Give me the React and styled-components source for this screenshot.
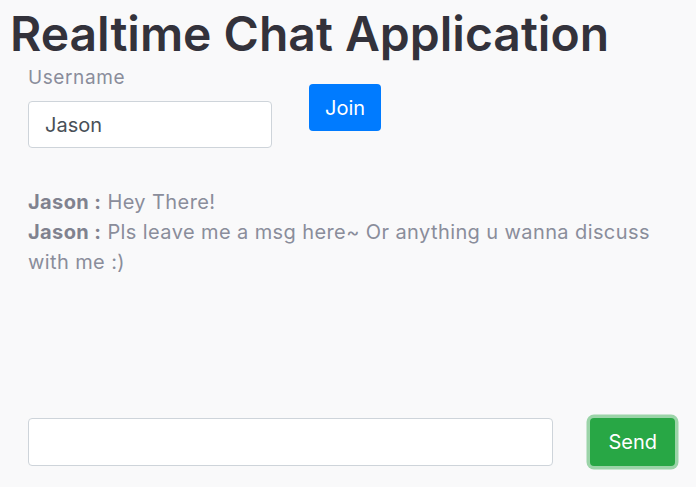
import React from 'react';
import styled, { createGlobalStyle } from 'styled-components';

const GlobalStyle = createGlobalStyle`
  html, body {
    margin: 0;
    padding: 0;
    background: #f9f9fa;
  }
  * {
    box-sizing: border-box;
  }
`;

const messages = [
  { user: 'Jason', text: 'Hey There!' },
  { user: 'Jason', text: 'Pls leave me a msg here~ Or anything u wanna discuss with me :)' },
];

const App = () => {
  return (
    <Page>
      <GlobalStyle />
      <Title>Realtime Chat Application</Title>
      <Body>
        <JoinRow>
          <Field>
            <Label>Username</Label>
            <TextInput defaultValue="Jason" />
          </Field>
          <Button color="blue">Join</Button>
        </JoinRow>
        <MessageList>
          {messages.map((m, i) => (
            <Message key={i}>
              <Author>{m.user} :</Author>
              {m.text}
            </Message>
          ))}
        </MessageList>
        <SendRow>
          <TextInput wide />
          <Button color="green" focused>Send</Button>
        </SendRow>
      </Body>
    </Page>
  );
};

const Page = styled.div`
  height: 487px;
  display: flex;
  flex-direction: column;
  font-family: Inter, "Noto Sans", sans-serif;
  overflow: hidden;
`;

const Title = styled.h1`
  margin: 0;
  padding: 6px 0 0 10px;
  font-size: 48px;
  font-weight: 600;
  line-height: 56px;
  color: #33323b;
`;

const Body = styled.div`
  flex: 1;
  display: flex;
  flex-direction: column;
  padding: 2px 21px 21px 28px;
`;

const JoinRow = styled.div`
  display: flex;
  align-items: flex-start;
  gap: 37px;
`;

const Field = styled.div`
  display: flex;
  flex-direction: column;
  gap: 10px;
`;

const Label = styled.label`
  font-size: 19px;
  line-height: 27px;
  letter-spacing: 0.6px;
  color: #8a8d9b;
`;

const TextInput = styled.input`
  width: ${p => (p.wide ? 'auto' : '244px')};
  flex: ${p => (p.wide ? '1' : 'none')};
  height: ${p => (p.wide ? '48px' : '47px')};
  padding: 0 16px;
  border: 1px solid #ced4da;
  border-radius: 4px;
  background: #fff;
  font-family: inherit;
  font-size: 20px;
  color: #495057;
  outline: none;
`;

const Button = styled.button`
  margin-top: ${p => (p.color === 'blue' ? '20px' : '0')};
  height: ${p => (p.color === 'blue' ? '47px' : '48px')};
  padding: 0 ${p => (p.color === 'blue' ? '16px' : '18px')};
  border: none;
  border-radius: 4px;
  background: ${p => (p.color === 'blue' ? '#007bff' : '#28a745')};
  color: #fff;
  font-family: inherit;
  font-size: 20px;
  box-shadow: ${p => (p.focused ? '0 0 0 3.5px rgba(40, 167, 69, 0.45)' : 'none')};
`;

const MessageList = styled.div`
  flex: 1;
  margin-top: 39px;
`;

const Message = styled.div`
  font-size: 20px;
  line-height: 30px;
  letter-spacing: 0.4px;
  color: #8a8d9b;
`;

const Author = styled.b`
  margin-right: 6px;
  font-weight: 700;
  color: #80828f;
`;

const SendRow = styled.div`
  display: flex;
  gap: 37px;
`;

export default App;
